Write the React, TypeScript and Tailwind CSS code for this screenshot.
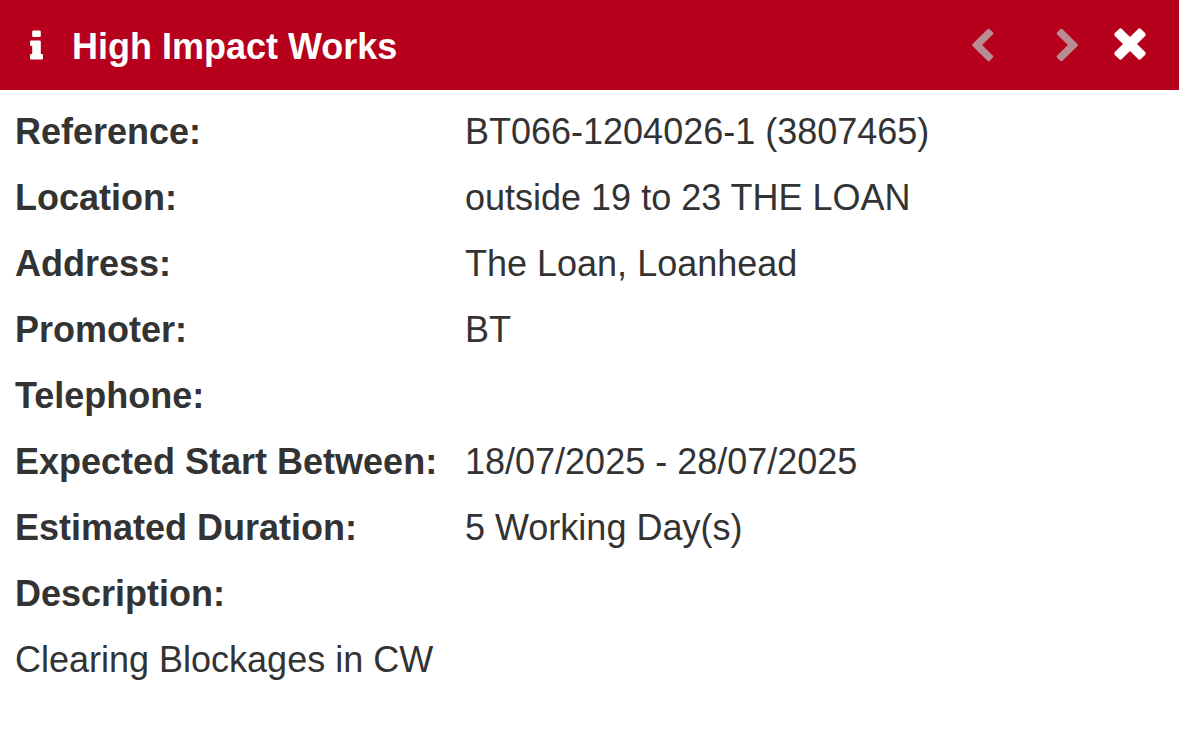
const details = [
  { label: 'Reference:', value: 'BT066-1204026-1 (3807465)' },
  { label: 'Location:', value: 'outside 19 to 23 THE LOAN' },
  { label: 'Address:', value: 'The Loan, Loanhead' },
  { label: 'Promoter:', value: 'BT' },
  { label: 'Telephone:', value: '' },
  { label: 'Expected Start Between:', value: '18/07/2025 - 28/07/2025' },
  { label: 'Estimated Duration:', value: '5 Working Day(s)' },
  { label: 'Description:', value: '' },
];

function InfoIcon() {
  return (
    <svg width="14" height="30" viewBox="0 0 14 30" fill="currentColor" aria-hidden="true">
      <rect x="2.2" y="0.6" width="8.6" height="6.4" rx="1.3" />
      <path d="M1.2 10.600H9.600q1.200 0 1.200 1.200V24h1q1.200 0 1.200 1.200v3.100q0 1.200-1.200 1.200H1.200Q0 29.500 0 28.300V25.200Q0 24 1.200 24H2.200V16H1.200Q0 16 0 14.800V11.800Q0 10.600 1.200 10.600Z" />
    </svg>
  );
}

function ChevronIcon({ className = '' }: { className?: string }) {
  return (
    <svg width="22" height="34" viewBox="0 0 22 34" fill="currentColor" className={className} aria-hidden="true">
      <path d="M.5 16 15.500 1.200Q16.600.2 17.700 1.200L20.800 4.300Q21.800 5.300 20.800 6.400L10.100 17 20.800 27.600Q21.800 28.700 20.800 29.700L17.700 32.800Q16.600 33.800 15.500 32.800L.5 18Q-.4 17 .5 16Z" />
    </svg>
  );
}

function CloseIcon() {
  return (
    <svg width="32" height="34" viewBox="0 0 32 34" fill="currentColor" aria-hidden="true">
      <path d="M5.100.9Q6.500-.2 7.900.9L16 9 24.100.9Q25.500-.2 26.900.9L31.100 5.100Q32.200 6.500 31.100 7.900L23 16 31.100 24.100Q32.200 25.500 31.100 26.900L26.900 31.100Q25.500 32.200 24.100 31.100L16 23 7.900 31.100Q6.500 32.200 5.100 31.100L.9 26.900Q-.2 25.500.9 24.100L9 16 .9 7.900Q-.2 6.500.9 5.100Z" />
    </svg>
  );
}

export default function App() {
  return (
    <div className="min-h-screen bg-white font-['Liberation_Sans',Arial,sans-serif] text-[36px] leading-[42px] text-[#333333]">
      <header className="flex h-[90px] items-center bg-[#b7001b] pr-[33px] pl-[30px] text-white">
        <InfoIcon />
        <h1 className="ml-7 flex-1 pt-1 font-bold">High Impact Works</h1>
        <button type="button" aria-label="Previous" className="mr-[62px] text-[#b98b92]">
          <ChevronIcon />
        </button>
        <button type="button" aria-label="Next" className="mr-9 text-[#b98b92]">
          <ChevronIcon className="rotate-180" />
        </button>
        <button type="button" aria-label="Close">
          <CloseIcon />
        </button>
      </header>

      <main className="px-[15px] pt-[9px]">
        <table className="w-full text-left">
          <tbody>
            {details.map((item) => (
              <tr key={item.label} className="h-[66px]">
                <th scope="row" className="w-[450px] font-bold whitespace-nowrap">{item.label}</th>
                <td>{item.value}</td>
              </tr>
            ))}
            <tr className="h-[66px]">
              <td colSpan={2}>Clearing Blockages in CW</td>
            </tr>
          </tbody>
        </table>
      </main>
    </div>
  );
}
